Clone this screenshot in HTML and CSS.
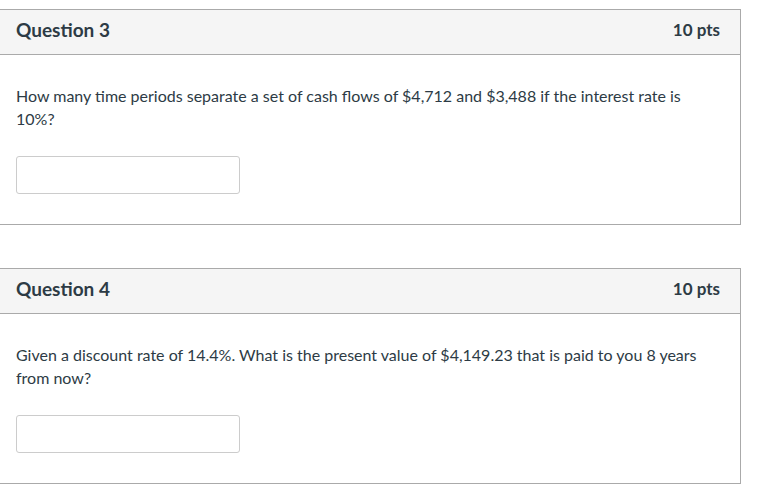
FILE: index.html
```html
<!DOCTYPE html>
<html>
<head>
<meta charset="utf-8">
<link rel="stylesheet" href="styles.css">
</head>
<body>
<div class="quiz">
  <div class="question">
    <div class="q-header">
      <span class="q-title">Question 3</span>
      <span class="q-pts">10 pts</span>
    </div>
    <div class="q-body">
      <p class="q-text">How many time periods separate a set of cash flows of $4,712 and $3,488 if the interest rate is 10%?</p>
      <input class="q-input" type="text">
    </div>
  </div>
  <div class="question">
    <div class="q-header">
      <span class="q-title">Question 4</span>
      <span class="q-pts">10 pts</span>
    </div>
    <div class="q-body">
      <p class="q-text">Given a discount rate of 14.4%. What is the present value of $4,149.23 that is paid to you 8 years from now?</p>
      <input class="q-input" type="text">
    </div>
  </div>
</div>
</body>
</html>
```
FILE: styles.css
```css
html, body {
  margin: 0;
  padding: 0;
  background: #fff;
}
body {
  font-family: Lato, "Helvetica Neue", Arial, sans-serif;
  color: #2d3b45;
}
.quiz {
  display: flex;
  flex-direction: column;
  gap: 43px;
  padding-top: 9px;
  margin-left: -1px;
  width: 742px;
}
.question {
  border: 1px solid #aaa;
  box-sizing: border-box;
}
.q-header {
  display: flex;
  justify-content: space-between;
  align-items: center;
  box-sizing: border-box;
  height: 45px;
  padding: 0 20px 5px 16px;
  background: #f5f5f5;
  border-bottom: 1px solid #aaa;
}
.q-title {
  font-weight: bold;
  font-size: 19px;
}
.q-pts {
  font-weight: bold;
  font-size: 17px;
}
.q-body {
  padding: 30px 16px 30px;
}
.q-text {
  margin: 0 0 26px;
  font-size: 16px;
  line-height: 22.5px;
  max-width: 690px;
}
.q-input {
  display: block;
  box-sizing: border-box;
  width: 224px;
  height: 38px;
  border: 1px solid #ccc;
  border-radius: 3px;
  margin: 0;
  padding: 0;
  background: #fff;
}
```
